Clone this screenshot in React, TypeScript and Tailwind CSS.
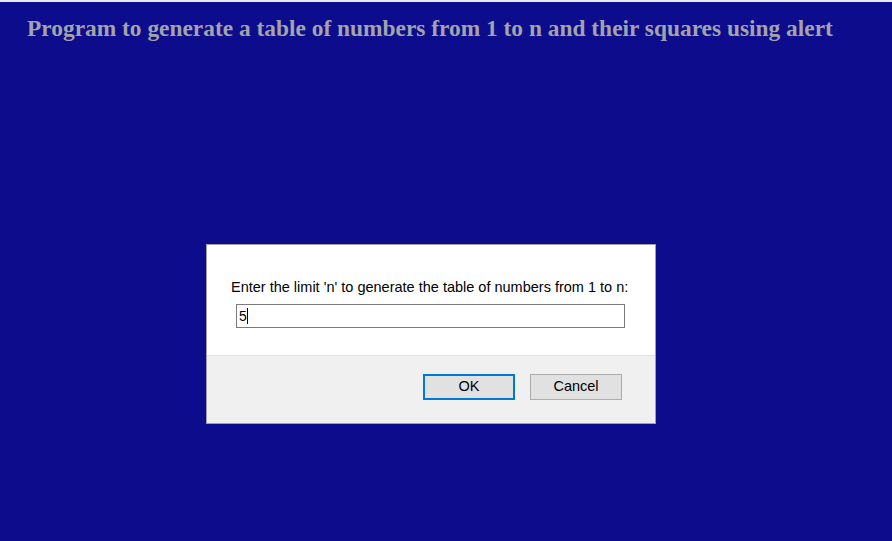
export default function App() {
  return (
    <div className="min-h-[541px] w-[892px] bg-[#0c0c8c] border-t-2 border-[#e8e8f4]">
      <h1
        className="pl-[27px] pt-[12px] text-[23.4px] leading-[28px] font-bold text-[#a3a3ab]"
        style={{ fontFamily: '"Liberation Serif", "Times New Roman", serif' }}
      >
        Program to generate a table of numbers from 1 to n and their squares using alert
      </h1>
      <div
        className="ml-[206px] mt-[202px] w-[450px] h-[180px] border border-[#a0a0a0] bg-white flex flex-col text-black"
        style={{ fontFamily: '"Liberation Sans", Arial, sans-serif' }}
      >
        <div className="h-[110px] pl-[24px] pt-[34px]">
          <p className="text-[14.5px] leading-[16px]">
            Enter the limit 'n' to generate the table of numbers from 1 to n:
          </p>
          <div className="ml-[5px] mt-[9px] w-[389px] h-[24px] border border-[#7a7a7a] flex items-center pl-[2px] text-[14px]">
            <span>5</span>
            <span className="w-px h-[16px] bg-black"></span>
          </div>
        </div>
        <div className="flex-1 bg-[#f0f0f0] border-t border-[#e2e2e2] flex justify-end items-start pt-[18px] pr-[33px] gap-[15px]">
          <button className="w-[92px] h-[26px] bg-[#e1e1e1] border-2 border-[#0078d7] text-[14.5px]">OK</button>
          <button className="w-[92px] h-[26px] bg-[#e1e1e1] border border-[#adadad] text-[14.5px]">Cancel</button>
        </div>
      </div>
    </div>
  )
}
